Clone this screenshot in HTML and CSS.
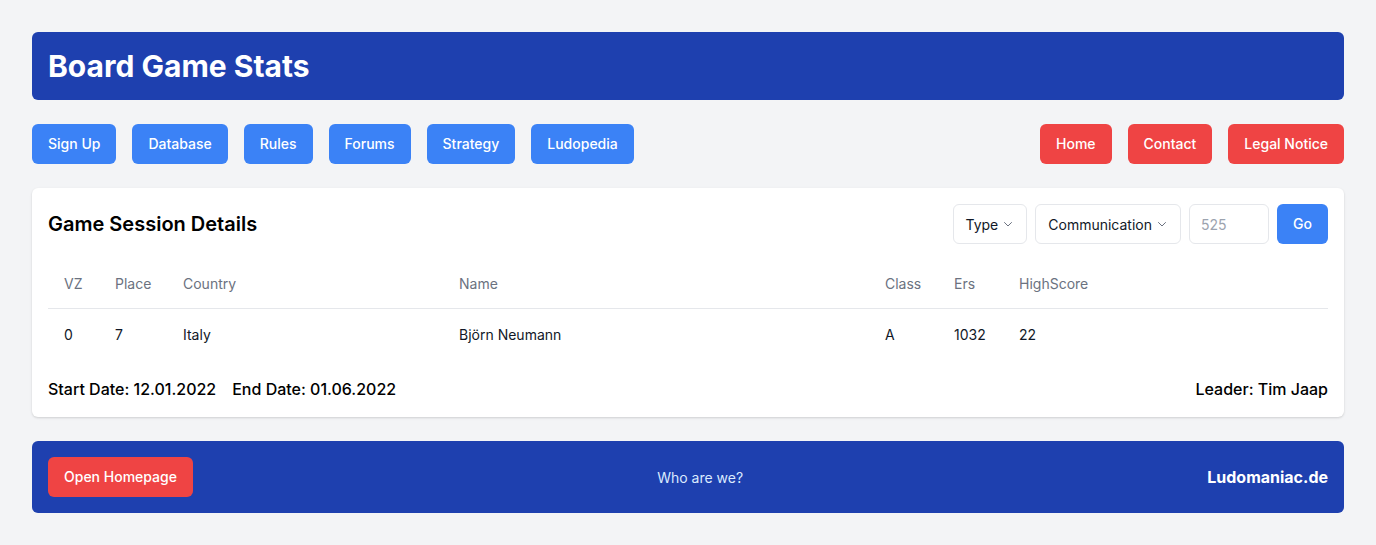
FILE: index.html
```html
<!DOCTYPE html>
<html lang="en">
<head>
<meta charset="utf-8">
<title>Board Game Stats</title>
<link rel="stylesheet" href="styles.css">
</head>
<body>
<div class="page">
  <header class="header">
    <h1 class="title">Board Game Stats</h1>
  </header>

  <nav class="nav">
    <div class="nav-group">
      <a class="btn btn-blue">Sign Up</a>
      <a class="btn btn-blue">Database</a>
      <a class="btn btn-blue">Rules</a>
      <a class="btn btn-blue">Forums</a>
      <a class="btn btn-blue">Strategy</a>
      <a class="btn btn-blue">Ludopedia</a>
    </div>
    <div class="nav-group">
      <a class="btn btn-red">Home</a>
      <a class="btn btn-red">Contact</a>
      <a class="btn btn-red">Legal Notice</a>
    </div>
  </nav>

  <section class="card">
    <div class="card-head">
      <h2 class="card-title">Game Session Details</h2>
      <div class="controls">
        <div class="select">Type<svg class="chev" viewBox="0 0 12 12" width="12" height="12"><path d="M2.5 4.5 6 8l3.5-3.5" fill="none" stroke="#6b7280" stroke-width="1" stroke-linecap="round" stroke-linejoin="round"/></svg></div>
        <div class="select">Communication<svg class="chev" viewBox="0 0 12 12" width="12" height="12"><path d="M2.5 4.5 6 8l3.5-3.5" fill="none" stroke="#6b7280" stroke-width="1" stroke-linecap="round" stroke-linejoin="round"/></svg></div>
        <input class="num" type="text" placeholder="525">
        <button class="btn btn-blue btn-go">Go</button>
      </div>
    </div>

    <table class="table">
      <colgroup>
        <col class="c-vz"><col class="c-place"><col class="c-country"><col class="c-name"><col class="c-class"><col class="c-ers"><col>
      </colgroup>
      <thead>
        <tr><th>VZ</th><th>Place</th><th>Country</th><th>Name</th><th>Class</th><th>Ers</th><th>HighScore</th></tr>
      </thead>
      <tbody>
        <tr><td>0</td><td>7</td><td>Italy</td><td>Björn Neumann</td><td>A</td><td>1032</td><td>22</td></tr>
      </tbody>
    </table>

    <div class="card-foot">
      <div class="dates"><span>Start Date: 12.01.2022</span><span>End Date: 01.06.2022</span></div>
      <div>Leader: Tim Jaap</div>
    </div>
  </section>

  <footer class="footer">
    <a class="btn btn-red">Open Homepage</a>
    <span class="who">Who are we?</span>
    <span class="brand">Ludomaniac.de</span>
  </footer>
</div>
</body>
</html>
```

FILE: styles.css
```css
* { box-sizing: border-box; }
html, body { margin: 0; padding: 0; }
body {
  background: #f3f4f6;
  font-family: Inter, "Noto Sans", sans-serif;
  color: #111827;
}
.page {
  padding: 32px;
  display: flex;
  flex-direction: column;
  gap: 24px;
}
.header {
  background: #1e40af;
  border-radius: 6px;
  padding: 16px;
}
.title {
  margin: 0;
  color: #fff;
  font-size: 30px;
  line-height: 36px;
  font-weight: 700;
}
.nav {
  display: flex;
  justify-content: space-between;
}
.nav-group {
  display: flex;
  gap: 16px;
}
.btn {
  display: inline-flex;
  align-items: center;
  justify-content: center;
  height: 40px;
  padding: 0 16px;
  border-radius: 6px;
  font-size: 14px;
  line-height: 20px;
  font-weight: 500;
  font-family: inherit;
  color: #fff;
  border: none;
  text-decoration: none;
}
.btn-blue { background: #3b82f6; }
.btn-red { background: #ef4444; }

.card {
  background: #fff;
  border-radius: 6px;
  box-shadow: 0 1px 3px rgba(0,0,0,0.1), 0 1px 2px rgba(0,0,0,0.06);
  padding: 16px;
}
.card-head {
  display: flex;
  justify-content: space-between;
  align-items: center;
}
.card-title {
  margin: 0;
  font-size: 20px;
  line-height: 28px;
  font-weight: 600;
  color: #000;
}
.controls {
  display: flex;
  gap: 8px;
}
.select {
  display: flex;
  align-items: center;
  gap: 4px;
  height: 40px;
  padding: 0 12px;
  border: 1px solid #e5e7eb;
  border-radius: 6px;
  font-size: 14px;
  color: #111827;
}
.chev { display: block; }
.num {
  width: 80px;
  height: 40px;
  padding: 0 11px;
  border: 1px solid #e5e7eb;
  border-radius: 6px;
  font-family: inherit;
  font-size: 14px;
}
.num::placeholder { color: #9ca3af; }
.btn-go { width: 51px; padding: 0; }

.table {
  width: 100%;
  margin-top: 20px;
  border-collapse: collapse;
  table-layout: fixed;
  font-size: 14px;
  line-height: 20px;
}
.c-vz { width: 51px; }
.c-place { width: 68px; }
.c-country { width: 276px; }
.c-name { width: 426px; }
.c-class { width: 69px; }
.c-ers { width: 65px; }
.table th {
  text-align: left;
  font-weight: 400;
  color: #6b7280;
  padding: 10px 16px 14px;
  border-bottom: 1px solid #e5e7eb;
}
.table td {
  padding: 16px;
  color: #111827;
}
.card-foot {
  display: flex;
  justify-content: space-between;
  margin-top: 16px;
  font-size: 16px;
  line-height: 24px;
  font-weight: 500;
  color: #000;
}
.dates { display: flex; gap: 16px; }

.footer {
  background: #1e40af;
  border-radius: 6px;
  padding: 16px;
  display: flex;
  justify-content: space-between;
  align-items: center;
}
.who {
  color: #dbeafe;
  font-size: 14px;
}
.brand {
  color: #fff;
  font-size: 16px;
  font-weight: 700;
}
```
